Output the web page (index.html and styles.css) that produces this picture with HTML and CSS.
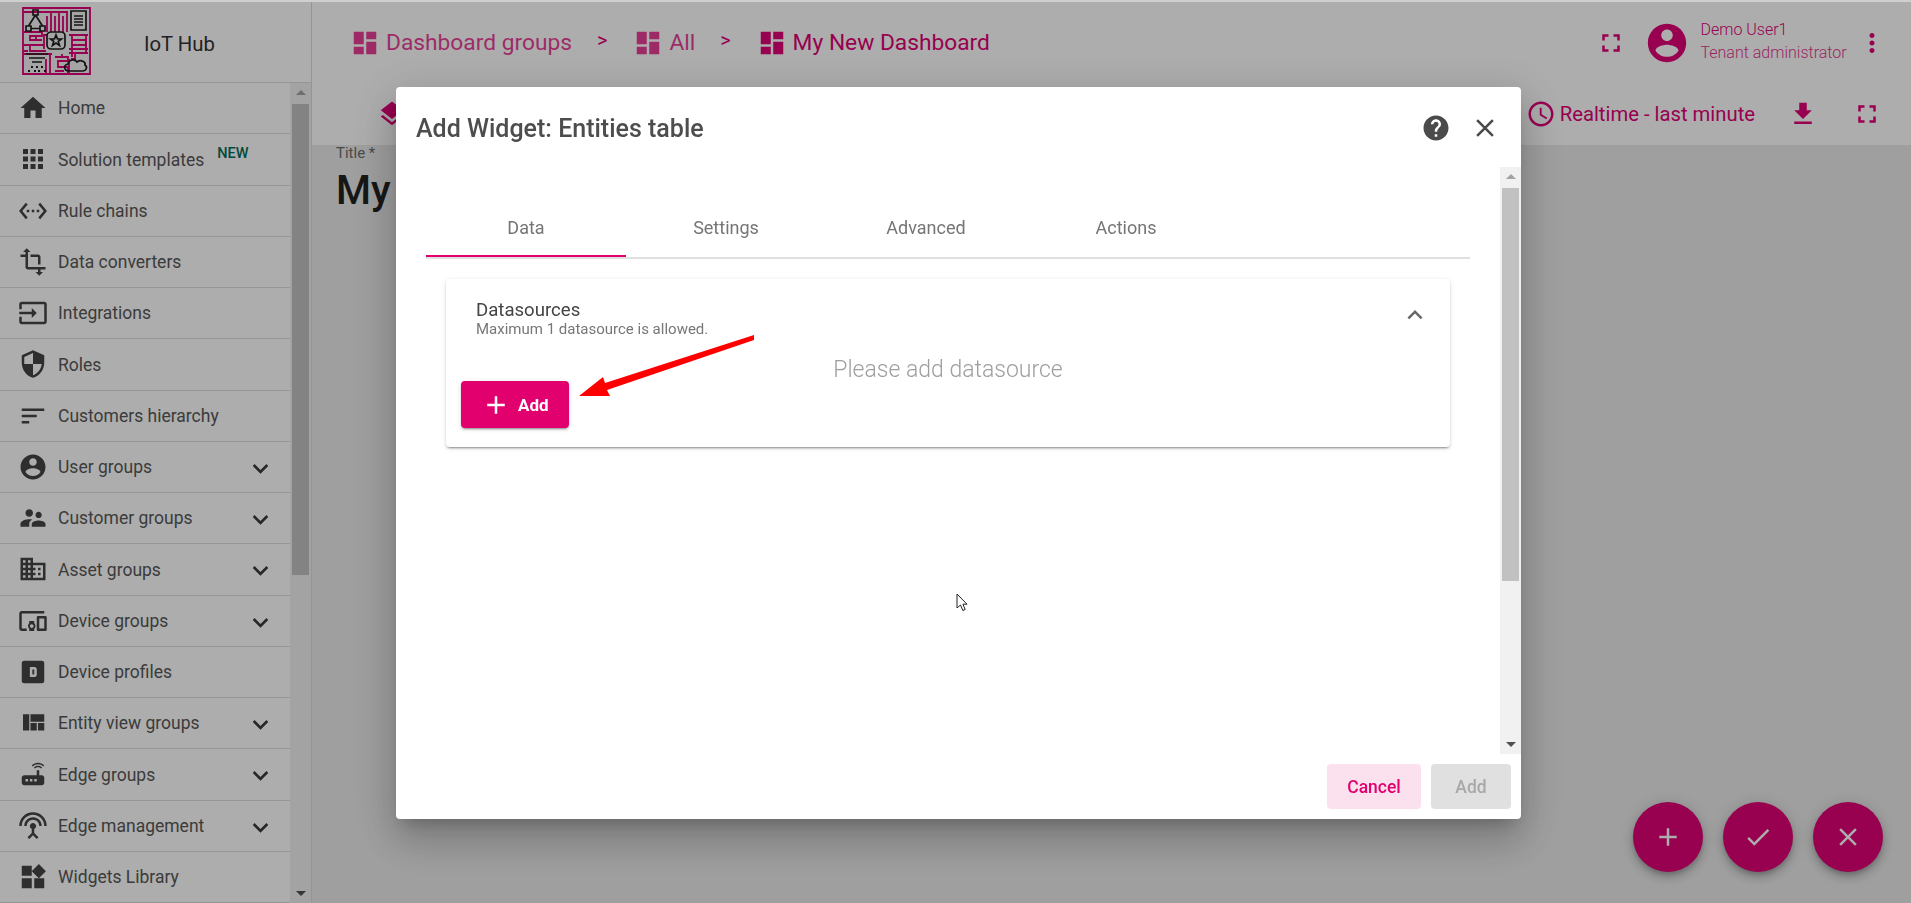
FILE: index.html
```html
<!DOCTYPE html>
<html lang="en">
<head>
<meta charset="utf-8">
<title>IoT Hub</title>
<link rel="stylesheet" href="styles.css">
</head>
<body>
<svg class="defs" width="0" height="0" aria-hidden="true">
  <symbol id="i-home" viewBox="0 0 24 24"><path d="M10 20v-6h4v6h5v-8h3L12 3 2 12h3v8z"/></symbol>
  <symbol id="i-apps" viewBox="0 0 24 24"><path d="M4 8h4V4H4v4zm6 12h4v-4h-4v4zm-6 0h4v-4H4v4zm0-6h4v-4H4v4zm6 0h4v-4h-4v4zm6-10v4h4V4h-4zm-6 4h4V4h-4v4zm6 6h4v-4h-4v4zm0 6h4v-4h-4v4z"/></symbol>
  <symbol id="i-eth" viewBox="0 0 24 24"><path d="M7.77 6.76L6.23 5.48.82 12l5.41 6.52 1.54-1.28L3.42 12l4.35-5.24zM7 13h2v-2H7v2zm10-2h-2v2h2v-2zm-6 2h2v-2h-2v2zm6.77-7.52l-1.54 1.28L20.58 12l-4.35 5.24 1.54 1.28L23.18 12l-5.41-6.52z"/></symbol>
  <symbol id="i-transform" viewBox="0 0 24 24"><path d="M22 18v-2H8V4h2L7 1 4 4h2v2H2v2h4v8c0 1.1.9 2 2 2h8v2h-2l3 3 3-3h-2v-2h4zM10 8h6v6h2V8c0-1.1-.9-2-2-2h-6v2z"/></symbol>
  <symbol id="i-input" viewBox="0 0 24 24"><path d="M21 3.01H3c-1.1 0-2 .9-2 2V9h2V4.99h18v14.03H3V15H1v4.01c0 1.1.9 1.98 2 1.98h18c1.1 0 2-.88 2-1.98v-14c0-1.11-.9-2-2-2zM11 16l4-4-4-4v3H1v2h10v3z"/></symbol>
  <symbol id="i-security" viewBox="0 0 24 24"><path d="M12 1L3 5v6c0 5.55 3.84 10.74 9 12 5.16-1.26 9-6.45 9-12V5l-9-4zm0 10.99h7c-.53 4.12-3.28 7.79-7 8.94V12H5V6.3l7-3.11v8.8z"/></symbol>
  <symbol id="i-sort" viewBox="0 0 24 24"><path d="M3 18h6v-2H3v2zM3 6v2h18V6H3zm0 7h12v-2H3v2z"/></symbol>
  <symbol id="i-account" viewBox="0 0 24 24"><path d="M12 2C6.48 2 2 6.48 2 12s4.48 10 10 10 10-4.48 10-10S17.52 2 12 2zm0 3c1.66 0 3 1.34 3 3s-1.34 3-3 3-3-1.34-3-3 1.34-3 3-3zm0 14.2c-2.5 0-4.71-1.28-6-3.22.03-1.99 4-3.08 6-3.08 1.99 0 5.97 1.09 6 3.08-1.29 1.94-3.5 3.22-6 3.22z"/></symbol>
  <symbol id="i-super" viewBox="0 0 24 24"><path d="M16.5 12c1.38 0 2.49-1.12 2.49-2.5S17.88 7 16.5 7C15.12 7 14 8.12 14 9.5s1.12 2.5 2.5 2.5zM9 11c1.66 0 2.99-1.34 2.99-3S10.66 5 9 5C7.34 5 6 6.34 6 8s1.34 3 3 3zm7.5 3c-1.83 0-5.5.92-5.5 2.75V19h11v-2.25c0-1.83-3.67-2.75-5.5-2.75zM9 13c-2.33 0-7 1.17-7 3.5V19h7v-2.25c0-.85.33-2.34 2.37-3.47C10.5 13.1 9.66 13 9 13z"/></symbol>
  <symbol id="i-domain" viewBox="0 0 24 24"><path d="M12 7V3H2v18h20V7H12zM6 19H4v-2h2v2zm0-4H4v-2h2v2zm0-4H4V9h2v2zm0-4H4V5h2v2zm4 12H8v-2h2v2zm0-4H8v-2h2v2zm0-4H8V9h2v2zm0-4H8V5h2v2zm10 12h-8v-2h2v-2h-2v-2h2v-2h-2V9h8v10zm-2-8h-2v2h2v-2zm0 4h-2v2h2v-2z"/></symbol>
  <symbol id="i-devices" viewBox="0 0 24 24"><path d="M3 6h18V4H3c-1.1 0-2 .9-2 2v12c0 1.1.9 2 2 2h4v-2H3V6zm10 6H9v1.78c-.61.55-1 1.33-1 2.22s.39 1.67 1 2.22V20h4v-1.78c.61-.55 1-1.34 1-2.22s-.39-1.67-1-2.22V12zm-2 5.5c-.83 0-1.5-.67-1.5-1.5s.67-1.5 1.5-1.5 1.5.67 1.5 1.5-.67 1.5-1.5 1.5zM22 8h-6c-.5 0-1 .5-1 1v10c0 .5.5 1 1 1h6c.5 0 1-.5 1-1V9c0-.5-.5-1-1-1zm-1 10h-4v-8h4v8z"/></symbol>
  <symbol id="i-dbox" viewBox="0 0 24 24"><path fill-rule="evenodd" d="M5 3h14a2 2 0 0 1 2 2v14a2 2 0 0 1-2 2H5a2 2 0 0 1-2-2V5a2 2 0 0 1 2-2zm4.500 5v8h3.500a2 2 0 0 0 2-2v-4a2 2 0 0 0-2-2zm2 2h1.500v4h-1.500z"/></symbol>
  <symbol id="i-quilt" viewBox="0 0 24 24"><path d="M10 18h5v-6h-5v6zm-6 0h5V5H4v13zm12 0h5v-6h-5v6zM10 5v6h11V5H10z"/></symbol>
  <symbol id="i-router" viewBox="0 0 24 24"><path d="M20.200 5.900l.8-.8C19.600 3.700 17.800 3 16 3s-3.600.7-5 2.100l.8.8C13 4.800 14.500 4.200 16 4.200s3 .6 4.200 1.700zm-.9.8c-.9-.9-2.100-1.400-3.300-1.400s-2.400.5-3.300 1.400l.8.8c.7-.7 1.600-1 2.500-1 .9 0 1.800.3 2.500 1l.8-.8zM19 13h-2V9h-2v4H5c-1.100 0-2 .9-2 2v4c0 1.100.9 2 2 2h14c1.100 0 2-.9 2-2v-4c0-1.100-.9-2-2-2zM8 18H6v-2h2v2zm3.500 0h-2v-2h2v2zm3.500 0h-2v-2h2v2z"/></symbol>
  <symbol id="i-antenna" viewBox="0 0 24 24"><path d="M12 5c-3.870 0-7 3.130-7 7h2c0-2.760 2.240-5 5-5s5 2.240 5 5h2c0-3.870-3.130-7-7-7zm1 9.290c.88-.39 1.500-1.260 1.500-2.290 0-1.380-1.120-2.500-2.500-2.500S9.500 10.620 9.500 12c0 1.020.62 1.900 1.500 2.290v3.300L7.590 21 9 22.410l3-3 3 3L16.410 21 13 17.590v-3.300zM12 1C5.930 1 1 5.930 1 12h2c0-4.970 4.030-9 9-9s9 4.030 9 9h2c0-6.070-4.930-11-11-11z"/></symbol>
  <symbol id="i-widgets" viewBox="0 0 24 24"><path d="M13 13v8h8v-8h-8zM3 21h8v-8H3v8zM3 3v8h8V3H3zm13.660-1.310L11 7.340 16.660 13l5.660-5.660-5.660-5.650z"/></symbol>
  <symbol id="i-more" viewBox="0 0 24 24"><path d="M16.590 8.590L12 13.170 7.410 8.590 6 10l6 6 6-6z"/></symbol>
  <symbol id="i-less" viewBox="0 0 24 24"><path d="M12 8l-6 6 1.410 1.410L12 10.830l4.590 4.580L18 14z"/></symbol>
  <symbol id="i-dash" viewBox="0 0 24 24"><path d="M3 13h8V3H3v10zm0 8h8v-6H3v6zm10 0h8V11h-8v10zm0-18v6h8V3h-8z"/></symbol>
  <symbol id="i-full" viewBox="0 0 24 24"><path d="M7 14H5v5h5v-2H7v-3zm-2-4h2V7h3V5H5v5zm12 7h-3v2h5v-5h-2v3zM14 5v2h3v3h2V5h-5z"/></symbol>
  <symbol id="i-vert" viewBox="0 0 24 24"><path d="M12 8c1.100 0 2-.9 2-2s-.9-2-2-2-2 .9-2 2 .9 2 2 2zm0 2c-1.100 0-2 .9-2 2s.9 2 2 2 2-.9 2-2-.9-2-2-2zm0 6c-1.100 0-2 .9-2 2s.9 2 2 2 2-.9 2-2-.9-2-2-2z"/></symbol>
  <symbol id="i-clock" viewBox="0 0 24 24"><path d="M11.990 2C6.470 2 2 6.480 2 12s4.470 10 9.990 10C17.520 22 22 17.520 22 12S17.520 2 11.990 2zM12 20c-4.420 0-8-3.580-8-8s3.580-8 8-8 8 3.580 8 8-3.580 8-8 8zm.5-13H11v6l5.250 3.150.75-1.230-4.500-2.670z"/></symbol>
  <symbol id="i-down" viewBox="0 0 24 24"><path d="M19 9h-4V3H9v6H5l7 7 7-7zM5 18v2h14v-2H5z"/></symbol>
  <symbol id="i-layers" viewBox="0 0 24 24"><path d="M11.990 18.540l-7.370-5.730L3 14.070l9 7 9-7-1.630-1.270-7.380 5.740zM12 16l7.360-5.730L21 9l-9-7-9 7 1.630 1.270L12 16z"/></symbol>
  <symbol id="i-help" viewBox="0 0 24 24"><path d="M12 2C6.480 2 2 6.480 2 12s4.480 10 10 10 10-4.480 10-10S17.520 2 12 2zm1 17h-2v-2h2v2zm2.070-7.750l-.9.92C13.450 12.900 13 13.500 13 15h-2v-.5c0-1.100.45-2.100 1.170-2.830l1.240-1.260c.37-.36.59-.86.59-1.410 0-1.100-.9-2-2-2s-2 .9-2 2H8c0-2.210 1.790-4 4-4s4 1.790 4 4c0 .88-.36 1.680-.93 2.250z"/></symbol>
  <symbol id="i-close" viewBox="0 0 24 24"><path d="M19 6.410L17.590 5 12 10.590 6.410 5 5 6.410 10.590 12 5 17.590 6.410 19 12 13.410 17.590 19 19 17.590 13.410 12z"/></symbol>
  <symbol id="i-add" viewBox="0 0 24 24"><path d="M19 13h-6v6h-2v-6H5v-2h6V5h2v6h6v2z"/></symbol>
  <symbol id="i-check" viewBox="0 0 24 24"><path d="M9 16.170L4.830 12l-1.420 1.410L9 19 21 7l-1.410-1.410z"/></symbol>
</svg>

<div class="app">
  <aside class="sidebar">
    <div class="brand">
      <svg class="logo" viewBox="0 0 69 68" aria-hidden="true">
        <rect width="69" height="68" fill="#f3f3f3"/>
        <g fill="none" stroke="#e10076" stroke-width="1.800">
          <path d="M1 1H68V67H1z"/>
          <path d="M1 5H46M25 9V25M29 5V25M33 9V25M37 5V25M41 9V25M45 5V25"/>
          <path d="M1 25H20V29H8V33H20M1 38H22M8 38V44H24M1 44H6M14 29V33"/>
          <path d="M25 28H22V42M47 28H66M50 33H64V38H50M47 42H66M50 28V50M47 46H66"/>
          <path d="M1 47H30M28 47V67M33 50H46V54H36V60H46V67M40 47V50M33 64H42M24 52V67M49 52H53V46"/>
          <path d="M64 28V46M47 52V67"/>
        </g>
        <g fill="none" stroke="#1d1d1d" stroke-width="1.700">
          <path d="M11 3h5v5h-5zM4 19h5v5H4zM18 19h5v5h-5zM13.500 8L6.500 19M13.500 8L20.500 19M9 21.500h9"/>
          <path d="M49 4h15v19h-15zM52 9h9M52 12h9M52 15h9M52 18h9"/>
          <rect x="25" y="25" width="18" height="17" rx="4"/>
          <path d="M34 28l1.500 4h4l-3.200 2.400 1.200 4-3.500-2.400-3.500 2.400 1.200-4L28.500 32h4z"/>
          <path d="M4 47h22M7 51h16M10 55h10"/>
          <path d="M47 64c-5 0-6-6-1-7 1-5 7-5 9-2 4-3 9 0 8 3 3 2 1 6-2 6z"/>
        </g>
        <g fill="#1d1d1d"><path d="M9 59h2v2H9zM14 59h2v2h-2zM19 59h2v2h-2zM6 63h2v2H6zM12 63h2v2h-2zM16 63h2v2h-2zM22 63h2v2h-2z"/></g>
      </svg>
      <span class="brand-name">IoT Hub</span>
    </div>
    <div class="nav-wrap">
      <nav class="nav">
        <a class="nav-row"><svg class="ic"><use href="#i-home"/></svg><span>Home</span></a>
        <a class="nav-row"><svg class="ic"><use href="#i-apps"/></svg><span>Solution templates</span><em class="new">NEW</em></a>
        <a class="nav-row"><svg class="ic"><use href="#i-eth"/></svg><span>Rule chains</span></a>
        <a class="nav-row"><svg class="ic"><use href="#i-transform"/></svg><span>Data converters</span></a>
        <a class="nav-row"><svg class="ic"><use href="#i-input"/></svg><span>Integrations</span></a>
        <a class="nav-row"><svg class="ic"><use href="#i-security"/></svg><span>Roles</span></a>
        <a class="nav-row"><svg class="ic"><use href="#i-sort"/></svg><span>Customers hierarchy</span></a>
        <a class="nav-row"><svg class="ic"><use href="#i-account"/></svg><span>User groups</span><svg class="ic chev"><use href="#i-more"/></svg></a>
        <a class="nav-row"><svg class="ic"><use href="#i-super"/></svg><span>Customer groups</span><svg class="ic chev"><use href="#i-more"/></svg></a>
        <a class="nav-row"><svg class="ic"><use href="#i-domain"/></svg><span>Asset groups</span><svg class="ic chev"><use href="#i-more"/></svg></a>
        <a class="nav-row"><svg class="ic"><use href="#i-devices"/></svg><span>Device groups</span><svg class="ic chev"><use href="#i-more"/></svg></a>
        <a class="nav-row"><svg class="ic"><use href="#i-dbox"/></svg><span>Device profiles</span></a>
        <a class="nav-row"><svg class="ic"><use href="#i-quilt"/></svg><span>Entity view groups</span><svg class="ic chev"><use href="#i-more"/></svg></a>
        <a class="nav-row"><svg class="ic"><use href="#i-router"/></svg><span>Edge groups</span><svg class="ic chev"><use href="#i-more"/></svg></a>
        <a class="nav-row"><svg class="ic"><use href="#i-antenna"/></svg><span>Edge management</span><svg class="ic chev"><use href="#i-more"/></svg></a>
        <a class="nav-row"><svg class="ic"><use href="#i-widgets"/></svg><span>Widgets Library</span></a>
      </nav>
      <div class="track nav-track">
        <i class="tri up"></i>
        <div class="thumb nav-thumb"></div>
        <i class="tri down"></i>
      </div>
    </div>
  </aside>

  <main class="main">
    <header class="topbar">
      <div class="crumbs">
        <a class="crumb faded"><svg class="ic"><use href="#i-dash"/></svg>Dashboard groups</a>
        <span class="sep">&gt;</span>
        <a class="crumb faded"><svg class="ic"><use href="#i-dash"/></svg>All</a>
        <span class="sep sep-b">&gt;</span>
        <a class="crumb"><svg class="ic"><use href="#i-dash"/></svg>My New Dashboard</a>
      </div>
      <div class="user">
        <svg class="ic full-a"><use href="#i-full"/></svg>
        <svg class="avatar"><use href="#i-account"/></svg>
        <div class="user-text">
          <div class="user-name">Demo User1</div>
          <div class="user-role">Tenant administrator</div>
        </div>
        <svg class="ic vert"><use href="#i-vert"/></svg>
      </div>
    </header>
    <div class="subbar">
      <svg class="ic layers"><use href="#i-layers"/></svg>
      <div class="sub-right">
        <svg class="ic"><use href="#i-clock"/></svg>
        <span class="realtime">Realtime - last minute</span>
        <svg class="ic dl"><use href="#i-down"/></svg>
        <svg class="ic fs"><use href="#i-full"/></svg>
      </div>
    </div>
    <section class="canvas">
      <label class="title-label">Title *</label>
      <div class="title-value">My New Dashboard</div>
      <div class="fabs">
        <button class="fab"><svg class="ic"><use href="#i-add"/></svg></button>
        <button class="fab"><svg class="ic"><use href="#i-check"/></svg></button>
        <button class="fab"><svg class="ic"><use href="#i-close"/></svg></button>
      </div>
    </section>
  </main>
</div>

<div class="overlay">
  <div class="modal">
    <div class="modal-head">
      <h2>Add Widget: Entities table</h2>
      <svg class="ic help"><use href="#i-help"/></svg>
      <svg class="ic close"><use href="#i-close"/></svg>
    </div>
    <div class="modal-body">
      <div class="modal-content">
        <div class="tabs">
          <div class="tab active">Data</div>
          <div class="tab">Settings</div>
          <div class="tab">Advanced</div>
          <div class="tab">Actions</div>
        </div>
        <div class="card">
          <div class="card-head">
            <div>
              <div class="card-title">Datasources</div>
              <div class="card-sub">Maximum 1 datasource is allowed.</div>
            </div>
            <svg class="ic card-chev"><use href="#i-less"/></svg>
          </div>
          <div class="placeholder">Please add datasource</div>
          <button class="add-btn"><svg class="ic"><use href="#i-add"/></svg>Add</button>
        </div>
      </div>
      <div class="track modal-track">
        <i class="tri up light"></i>
        <div class="thumb modal-thumb"></div>
        <i class="tri down dark"></i>
      </div>
    </div>
    <div class="modal-actions">
      <button class="btn cancel">Cancel</button>
      <button class="btn disabled">Add</button>
    </div>
  </div>
</div>

<div class="strip"></div>

<svg class="arrow" viewBox="0 0 190 75" aria-hidden="true">
  <path fill="#f00" d="M179 5V10L32 60l3 6H4L28 47l2 6z"/>
</svg>
<svg class="cursor" viewBox="0 0 14 20" aria-hidden="true">
  <path fill="#fff" stroke="#222" stroke-width="1" d="M1 1v14l3.500-3 2.300 5.500 2.400-1-2.300-5.300H11z"/>
</svg>
</body>
</html>
```
FILE: styles.css
```css
* { box-sizing: border-box; }
html, body { margin: 0; height: 100%; overflow: hidden; }
body { font-family: Roboto, "Liberation Sans", sans-serif; color: #212121; background: #fff; }
.defs { position: absolute; }
button { font-family: inherit; border: 0; }

.ic { width: 30px; height: 30px; fill: currentColor; flex: none; display: block; }

.app { display: flex; height: 903px; }

/* Sidebar */
.sidebar { width: 312px; flex: none; display: flex; flex-direction: column; background: #fff; border-right: 1px solid #dcdcdc; }
.brand { height: 83px; flex: none; display: flex; align-items: center; padding-left: 22px; border-bottom: 1px solid #dedede; }
.logo { width: 69px; height: 68px; display: block; flex: none; }
.brand-name { margin: 5px 0 0 53px; font-size: 20.300px; color: #333; }
.nav-wrap { flex: 1; display: flex; min-height: 0; }
.nav { width: 290px; flex: none; }
.nav-row { height: 51.25px; display: flex; align-items: center; padding-left: 18px; border-bottom: 1px solid #dedede; font-size: 17.500px; color: #585858; position: relative; }
.nav-row > span { margin-left: 10px; padding-top: .5px; }
.nav-row > .ic { color: #444; }
.nav-row > .chev { position: absolute; left: 245px; top: 11px; width: 31px; height: 31px; color: #3a3a3a; }
.new { font-style: normal; font-weight: 500; font-size: 14.500px; color: #006f5c; margin: -12px 0 0 13px; }

.track { width: 21px; flex: none; background: #f1f1f1; display: flex; flex-direction: column; align-items: center; position: relative; }
.thumb { width: 17px; background: #c1c1c1; flex: none; }
.nav-thumb { margin-top: 21px; height: 471px; }
.modal-thumb { margin-top: 21px; height: 393px; }
.tri { position: absolute; width: 0; height: 0; border-left: 5px solid transparent; border-right: 5px solid transparent; }
.tri.up { top: 7px; border-bottom: 5px solid #a3a3a3; }
.tri.down { bottom: 7px; border-top: 5px solid #505050; }

/* Main */
.main { flex: 1; min-width: 0; display: flex; flex-direction: column; background: #ebebeb; }
.topbar { height: 85px; flex: none; background: #fff; display: flex; align-items: center; justify-content: space-between; padding: 0 24px 0 38px; color: #e10076; }
.crumbs { display: flex; align-items: center; }
.crumb { display: flex; align-items: center; gap: 6px; font-size: 22.750px; line-height: 30px; padding-top: 1px; }
.crumb .ic { margin-top: -1px; }
.crumb.faded { opacity: .75; }
.sep { font-size: 20px; margin: -6px 26px 0 25px; }
.sep-b { margin: -6px 25.800px 0 25px; }
.user { display: flex; align-items: center; }
.full-a { margin-right: 18px; }
.avatar { width: 46px; height: 46px; fill: currentColor; margin-right: 10.500px; }
.user-text { font-size: 16px; font-weight: 300; line-height: 23.500px; width: 151.500px; margin-top: -2.500px; }
.user-role { opacity: .8; }
.vert { margin-left: 5px; }

.subbar { height: 60px; flex: none; background: #fff; display: flex; align-items: center; justify-content: space-between; padding: 0 29px 2px 65px; color: #e10076; }
.sub-right { display: flex; align-items: center; }
.realtime { font-size: 20.250px; margin-left: 3.500px; margin-right: 33px; }
.dl { margin-right: 34px; }

.canvas { flex: 1; position: relative; padding: 0 24px; }
.title-label { display: block; font-size: 15px; color: #6d6d6d; line-height: 16px; }
.title-value { font-size: 40px; font-weight: 500; line-height: 52px; margin-top: 4px; color: #222; white-space: nowrap; }
.fabs { position: absolute; right: 28px; bottom: 31px; display: flex; gap: 20px; }
.fab { width: 70px; height: 70px; border-radius: 50%; background: #e10076; color: #fff; display: flex; align-items: center; justify-content: center; padding: 0; box-shadow: 0 3px 5px -1px rgba(0,0,0,.2), 0 6px 10px rgba(0,0,0,.14), 0 1px 18px rgba(0,0,0,.12); }

/* Overlay and modal */
.overlay { position: fixed; inset: 0; background: rgba(0,0,0,.32); padding: 87px 390px 84px 396px; display: flex; }
.modal { flex: 1; min-width: 0; background: #fff; border-radius: 4px; display: flex; flex-direction: column; box-shadow: 0 11px 15px -7px rgba(0,0,0,.2), 0 24px 38px 3px rgba(0,0,0,.14), 0 9px 46px 8px rgba(0,0,0,.12); overflow: hidden; }
.modal-head { height: 80px; flex: none; display: flex; align-items: center; padding: 2px 0 0 20px; position: relative; color: #4b4b4b; }
.modal-head h2 { margin: 0; flex: 1; font-size: 25px; font-weight: 500; color: #4d4d4d; }
.help { margin-right: 19px; }
.close { margin-right: 21px; }
.modal-body { flex: 1; min-height: 0; display: flex; }
.modal-content { flex: 1; min-width: 0; padding-left: 30px; }
.tabs { margin-top: 33px; width: 1044px; height: 59px; display: flex; border-bottom: 2px solid #e0e0e0; }
.tab { width: 200px; height: 57px; display: flex; align-items: center; justify-content: center; padding-bottom: 3px; font-size: 18px; color: #757575; }
.tab.active { border-bottom: 2px solid #e2006f; padding-bottom: 1px; }
.card { position: relative; width: 1004px; height: 168px; margin: 20px 0 0 20px; background: #fff; border-radius: 4px; box-shadow: 0 3px 1px -2px rgba(0,0,0,.2), 0 2px 2px rgba(0,0,0,.14), 0 1px 5px rgba(0,0,0,.12); }
.card-head { height: 66px; display: flex; justify-content: space-between; padding: 20px 20px 0 30px; }
.card-title { font-size: 18.600px; line-height: 22px; color: #444; }
.card-sub { font-size: 15px; line-height: 17px; color: #777; }
.card-chev { color: #666; margin-top: 1px; }
.placeholder { height: 48px; line-height: 50px; text-align: center; font-size: 23px; font-weight: 300; color: #9e9e9e; }
.add-btn { position: absolute; left: 15px; top: 102px; width: 108px; height: 47px; display: flex; align-items: center; padding: 0 0 0 26px; gap: 13px; border-radius: 4px; background: #e2006f; color: #fff; font-size: 17px; font-weight: 700; box-shadow: 0 3px 1px -2px rgba(0,0,0,.2), 0 2px 2px rgba(0,0,0,.14), 0 1px 5px rgba(0,0,0,.12); }
.add-btn .ic { margin-left: -6px; margin-right: -6px; }
.modal-actions { height: 65px; flex: none; display: flex; justify-content: flex-end; gap: 10px; padding: 10px 10px 10px 0; }
.btn { height: 45px; border-radius: 4px; font-size: 17.500px; font-weight: 500; padding: 0; }
.cancel { width: 94px; background: #fbe0ee; color: #e2006f; }
.disabled { width: 80px; background: #e0e0e0; color: #a8a8a8; }

.strip { position: fixed; left: 0; right: 0; top: 0; height: 2px; background: #cfcfcf; }
.arrow { position: fixed; left: 575px; top: 330px; width: 190px; height: 75px; }
.cursor { position: fixed; left: 956px; top: 593px; width: 14px; height: 20px; }
```
